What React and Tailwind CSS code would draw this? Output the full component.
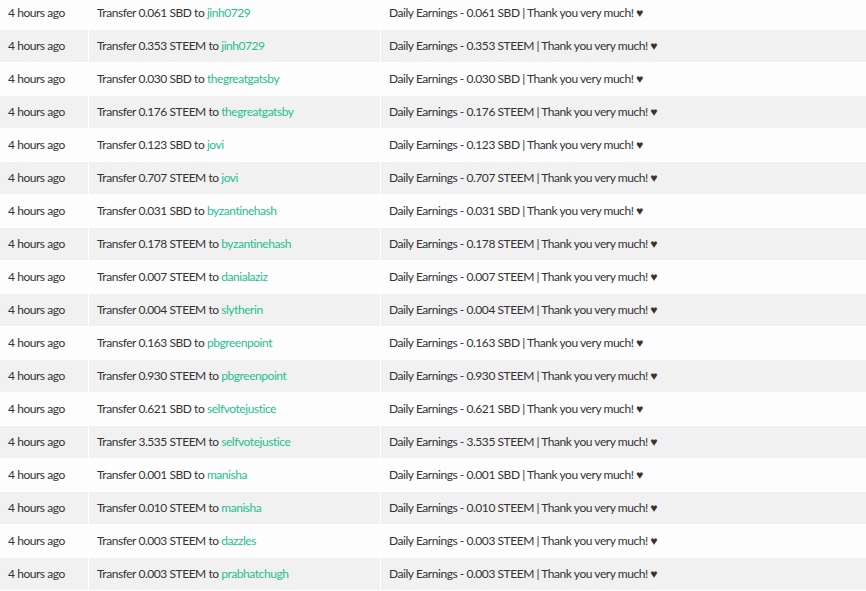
import React from 'react';

const rows = [
  ['0.061', 'SBD', 'jinh0729'],
  ['0.353', 'STEEM', 'jinh0729'],
  ['0.030', 'SBD', 'thegreatgatsby'],
  ['0.176', 'STEEM', 'thegreatgatsby'],
  ['0.123', 'SBD', 'jovi'],
  ['0.707', 'STEEM', 'jovi'],
  ['0.031', 'SBD', 'byzantinehash'],
  ['0.178', 'STEEM', 'byzantinehash'],
  ['0.007', 'STEEM', 'danialaziz'],
  ['0.004', 'STEEM', 'slytherin'],
  ['0.163', 'SBD', 'pbgreenpoint'],
  ['0.930', 'STEEM', 'pbgreenpoint'],
  ['0.621', 'SBD', 'selfvotejustice'],
  ['3.535', 'STEEM', 'selfvotejustice'],
  ['0.001', 'SBD', 'manisha'],
  ['0.010', 'STEEM', 'manisha'],
  ['0.003', 'STEEM', 'dazzles'],
  ['0.003', 'STEEM', 'prabhatchugh'],
];

export default function App() {
  return (
    <div className="w-[866px] h-[591px] overflow-hidden bg-white text-[12px] tracking-[-0.45px] text-[#333]" style={{ fontFamily: 'Lato, "Open Sans", sans-serif' }}>
      <div className="-mt-[3px]">
        {rows.map(([amt, cur, to], i) => (
          <div key={i} className={`flex h-[33px] border-b border-white ${i % 2 ? 'bg-[#f1f1f1]' : 'bg-[#fdfdfd]'}`}>
            <div className="w-[89px] flex items-center pl-2 border-r border-white">4 hours ago</div>
            <div className="w-[292px] flex items-center pl-2 border-r border-white">
              Transfer {amt} {cur} to&nbsp;<span className="text-[#1fbf8f]">{to}</span>
            </div>
            <div className="flex-1 flex items-center pl-2">
              Daily Earnings - {amt} {cur} | Thank you very much! ♥
            </div>
          </div>
        ))}
      </div>
    </div>
  );
}
